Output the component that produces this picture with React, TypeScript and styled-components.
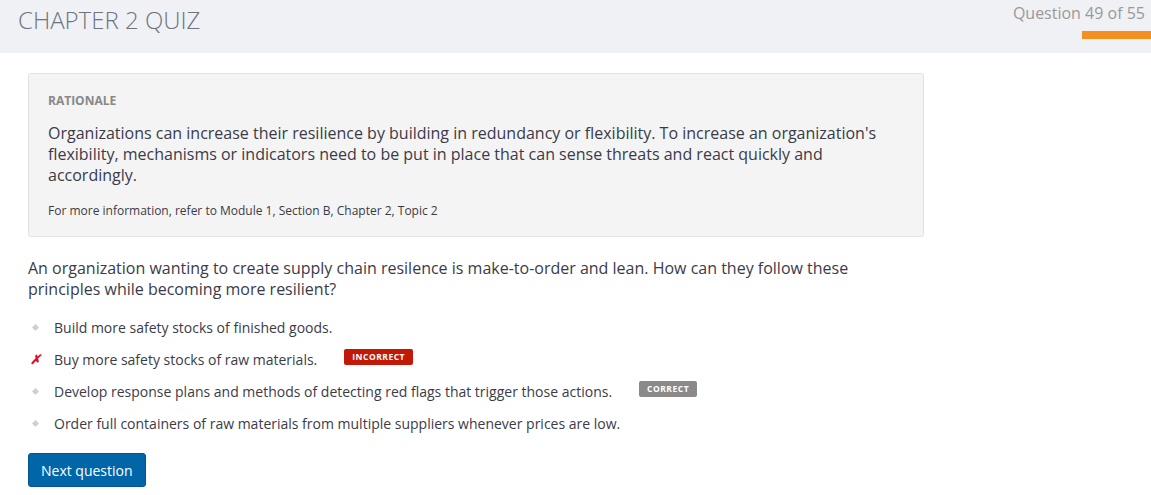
import React from "react";
import styled, { createGlobalStyle } from "styled-components";

const Global = createGlobalStyle`
  html, body { margin: 0; padding: 0; background: #fff; }
  body { font-family: "Open Sans", "Noto Sans", sans-serif; color: #333; }
  * { box-sizing: border-box; }
`;

const Header = styled.header`
  height: 53px;
  background: #f0f1f5;
  display: flex;
  justify-content: space-between;
  align-items: flex-start;
`;

const Title = styled.h1`
  margin: 0;
  padding: 4px 0 0 18px;
  font-size: 24px;
  font-weight: 300;
  color: #6c7480;
  line-height: 32px;
`;

const Progress = styled.div`
  display: flex;
  flex-direction: column;
  align-items: flex-end;
`;

const Counter = styled.div`
  font-size: 16px;
  color: #999;
  line-height: 22px;
  padding: 2px 6px 0 0;
`;

const Bar = styled.div`
  margin-top: 7px;
  width: 69px;
  height: 8px;
  background: #f39020;
`;

const Main = styled.main`
  padding: 20px 28px 0;
`;

const Rationale = styled.section`
  width: 896px;
  background: #f4f4f4;
  border: 1px solid #e2e2e2;
  border-radius: 3px;
  padding: 19px 19px 17px;
`;

const Label = styled.div`
  font-size: 12px;
  font-weight: 700;
  color: #888;
  line-height: 16px;
`;

const Para = styled.p`
  margin: 14px 0 0;
  font-size: 16px;
  line-height: 21px;
  color: #3b3b48;
`;

const Note = styled.p`
  margin: 16px 0 0;
  font-size: 12px;
  line-height: 17px;
  color: #3b3b48;
`;

const Question = styled.p`
  margin: 21px 0 0;
  font-size: 16px;
  line-height: 21px;
  color: #3b3b48;
  width: 860px;
`;

const Options = styled.ul`
  list-style: none;
  margin: 11px 0 0;
  padding: 0;
`;

const Option = styled.li`
  display: flex;
  align-items: center;
  height: 32px;
  font-size: 14px;
  color: #3b3b48;
`;

const Marker = styled.span`
  width: 26px;
  display: flex;
  align-items: center;
  justify-content: flex-start;
  padding-left: 2px;
`;

const Diamond = styled.span`
  display: block;
  width: 5px;
  height: 5px;
  margin-left: 3px;
  background: #cfcfcf;
  transform: rotate(45deg);
`;

const Cross = styled.span`
  color: #e0101a;
  font-size: 13px;
  font-weight: 700;
  font-style: italic;
  line-height: 1;
`;

const Badge = styled.span<{ $tone: "bad" | "good" }>`
  margin-left: 27px;
  background: ${(p) => (p.$tone === "bad" ? "#c21808" : "#8a8a8a")};
  color: #fff;
  font-size: 8.5px;
  font-weight: 700;
  letter-spacing: 0.5px;
  border-radius: 2px;
  height: 16px;
  line-height: 16px;
  padding: 0 8px;
  position: relative;
  top: -2px;
`;

const Button = styled.button`
  margin-top: 14px;
  background: #0066a8;
  color: #fff;
  border: 1px solid #00568e;
  border-radius: 3px;
  font-family: inherit;
  font-size: 14px;
  height: 34px;
  padding: 0 12px;
  cursor: pointer;
`;

type Opt = { text: string; mark?: "x"; badge?: "bad" | "good" };

const options: Opt[] = [
  { text: "Build more safety stocks of finished goods." },
  { text: "Buy more safety stocks of raw materials.", mark: "x", badge: "bad" },
  { text: "Develop response plans and methods of detecting red flags that trigger those actions.", badge: "good" },
  { text: "Order full containers of raw materials from multiple suppliers whenever prices are low." },
];

export default function App() {
  return (
    <>
      <Global />
      <Header>
        <Title>CHAPTER 2 QUIZ</Title>
        <Progress>
          <Counter>Question 49 of 55</Counter>
          <Bar />
        </Progress>
      </Header>
      <Main>
        <Rationale>
          <Label>RATIONALE</Label>
          <Para>
            Organizations can increase their resilience by building in redundancy or flexibility. To increase an
            organization's flexibility, mechanisms or indicators need to be put in place that can sense threats and
            react quickly and accordingly.
          </Para>
          <Note>For more information, refer to Module 1, Section B, Chapter 2, Topic 2</Note>
        </Rationale>
        <Question>
          An organization wanting to create supply chain resilence is make-to-order and lean. How can they follow
          these principles while becoming more resilient?
        </Question>
        <Options>
          {options.map((o) => (
            <Option key={o.text}>
              <Marker>{o.mark === "x" ? <Cross>✗</Cross> : <Diamond />}</Marker>
              {o.text}
              {o.badge && <Badge $tone={o.badge}>{o.badge === "bad" ? "INCORRECT" : "CORRECT"}</Badge>}
            </Option>
          ))}
        </Options>
        <Button>Next question</Button>
      </Main>
    </>
  );
}
